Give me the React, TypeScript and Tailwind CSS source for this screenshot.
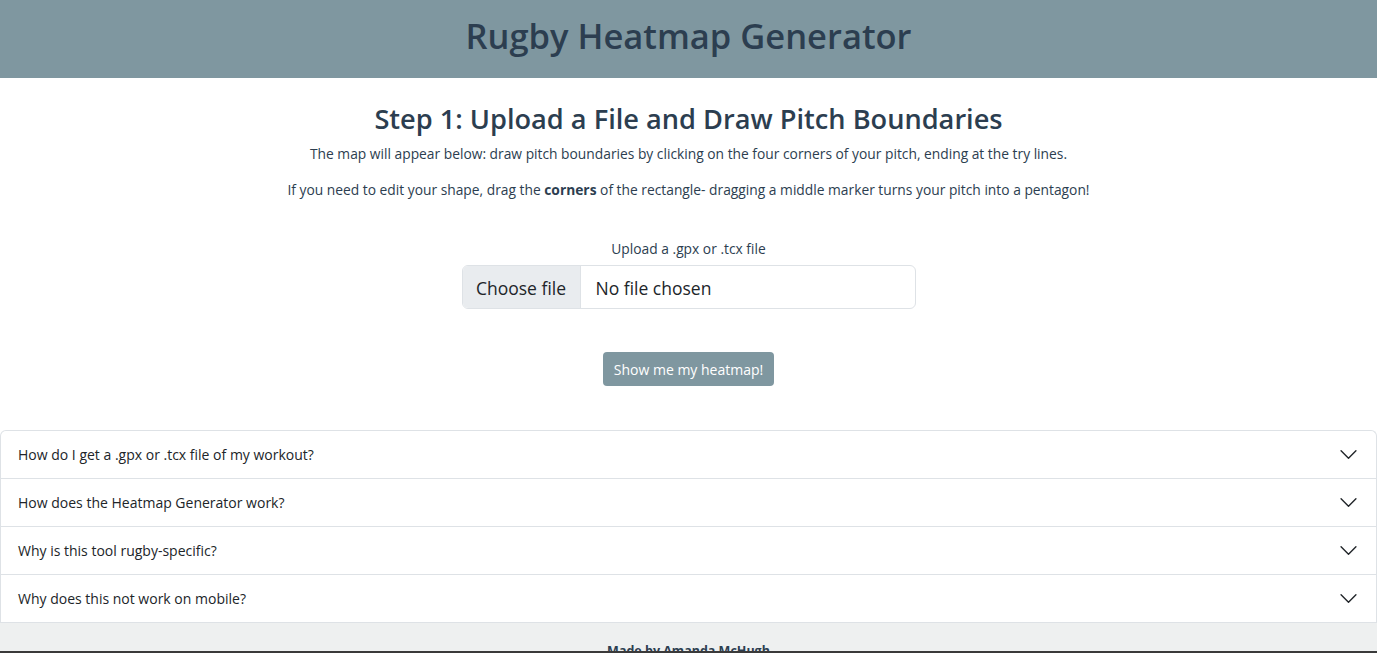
const faqs = [
  "How do I get a .gpx or .tcx file of my workout?",
  "How does the Heatmap Generator work?",
  "Why is this tool rugby-specific?",
  "Why does this not work on mobile?",
];

function Chevron() {
  return (
    <svg width="17" height="17" viewBox="0 0 16 16" fill="none">
      <path d="M1 4.5 8 11.5 15 4.5" stroke="#212529" strokeWidth="1.3" strokeLinecap="round" strokeLinejoin="round" />
    </svg>
  );
}

function AccordionItem({ title }: { title: string }) {
  return (
    <div className="border-b border-[#dee2e6]">
      <button className="flex h-[47px] w-full items-center justify-between pl-[17px] pr-[19px] text-left text-[14px] text-[#212529]">
        <span>{title}</span>
        <Chevron />
      </button>
    </div>
  );
}

export default function App() {
  return (
    <div className="min-h-screen bg-white font-['Open_Sans','Noto_Sans',sans-serif] text-[#212529]">
      <header className="flex h-[78px] items-center justify-center bg-[#7f97a0] pb-[5px]">
        <h1 className="text-[34.5px] font-semibold leading-none text-[#2c3e50]">Rugby Heatmap Generator</h1>
      </header>

      <main className="text-center">
        <h2 className="mt-[22px] mb-[5px] text-[27.2px] font-semibold leading-[38px] text-[#2c3e50]">
          Step 1: Upload a File and Draw Pitch Boundaries
        </h2>
        <p className="mb-[15px] text-[13.8px] leading-[21px] text-[#2c3e50]">
          The map will appear below: draw pitch boundaries by clicking on the four corners of your pitch, ending at the try lines.
        </p>
        <p className="text-[13.8px] leading-[21px] text-[#2c3e50]">
          If you need to edit your shape, drag the <b className="font-bold">corners</b> of the rectangle- dragging a middle marker turns your pitch into a pentagon!
        </p>

        <div className="mt-[38px] flex flex-col items-center">
          <label className="mb-[6px] text-[13.8px] leading-[21px] text-[#2c3e50]">Upload a .gpx or .tcx file</label>
          <div className="flex h-[44px] w-[454px] overflow-hidden rounded-[6px] border border-[#dee2e6] text-[17.5px] text-[#212529]">
            <span className="flex w-[118px] items-center justify-center border-r border-[#dee2e6] bg-[#e9ecef] pt-[2px]">
              Choose file
            </span>
            <span className="flex items-center pl-[15px] pt-[2px]">No file chosen</span>
          </div>

          <button className="mt-[43px] h-[34px] w-[171px] rounded-[4px] bg-[#7f97a0] text-[14px] text-white">
            Show me my heatmap!
          </button>
        </div>
      </main>

      <section className="mt-[44px] rounded-[6px] rounded-b-none border border-b-0 border-[#dee2e6]">
        {faqs.map((q) => (
          <AccordionItem key={q} title={q} />
        ))}
      </section>

      <footer className="bg-[#eef0f0] pt-[19px] pb-[20px] text-center text-[12.5px] font-bold text-[#2c3e50]">
        Made by Amanda McHugh
      </footer>

      <div className="fixed bottom-0 left-0 h-[2px] w-full bg-[#3a3a3a]" />
    </div>
  );
}
